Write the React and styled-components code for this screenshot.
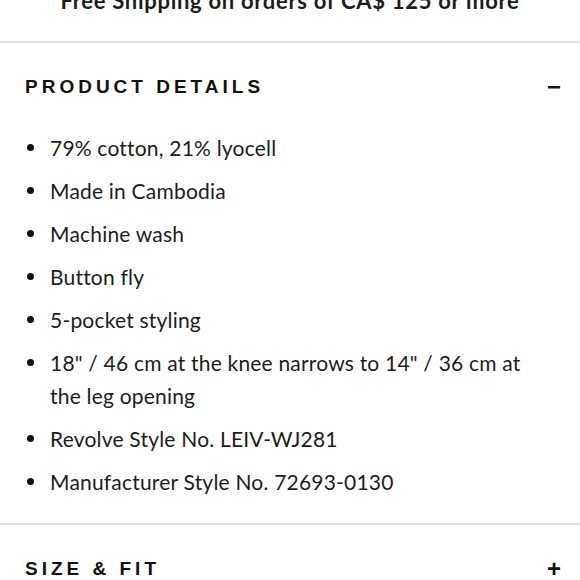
import React from "react";
import styled, { createGlobalStyle } from "styled-components";

const Global = createGlobalStyle`
  html, body {
    margin: 0;
    padding: 0;
    background: #fff;
    overflow: hidden;
  }
  body {
    font-family: "Lato", "Liberation Sans", sans-serif;
    color: #1c1c1c;
  }
`;

const Page = styled.div`
  width: 580px;
`;

const Banner = styled.div`
  height: 41px;
  border-bottom: 2px solid #e2e2e2;
  overflow: hidden;
  text-align: center;
  font-family: "Lato", sans-serif;
  font-weight: 700;
  font-size: 22px;
  letter-spacing: 0.7px;
  line-height: 24px;

  span {
    display: block;
    margin-top: -11px;
  }
`;

const Section = styled.section`
  border-bottom: ${(p) => (p.$last ? "none" : "2px solid #e2e2e2")};
`;

const Header = styled.div`
  height: 88px;
  display: flex;
  align-items: center;
  justify-content: space-between;
  padding: 0 19px 0 25px;
`;

const Title = styled.h2`
  margin: 0;
  font-family: "Liberation Sans", sans-serif;
  font-weight: 700;
  font-size: 19px;
  letter-spacing: 4px;
  color: #111;
`;

const Toggle = styled.span`
  font-family: "Liberation Sans", sans-serif;
  font-weight: 700;
  font-size: 24px;
  line-height: 1;
  color: #111;
`;

const List = styled.ul`
  list-style: none;
  margin: 0;
  padding: 0 40px 25px 50px;
`;

const Item = styled.li`
  position: relative;
  font-size: 21px;
  line-height: 33px;
  margin-bottom: 10px;
  letter-spacing: 0.2px;

  &:last-child {
    margin-bottom: 0;
  }

  &::before {
    content: "";
    position: absolute;
    left: -23px;
    top: 13px;
    width: 7px;
    height: 7px;
    border-radius: 50%;
    background: #111;
  }
`;

const details = [
  "79% cotton, 21% lyocell",
  "Made in Cambodia",
  "Machine wash",
  "Button fly",
  "5-pocket styling",
  "18\" / 46 cm at the knee narrows to 14\" / 36 cm at the leg opening",
  "Revolve Style No. LEIV-WJ281",
  "Manufacturer Style No. 72693-0130",
];

export default function App() {
  return (
    <Page>
      <Global />
      <Banner>
        <span>Free Shipping on orders of CA$ 125 or more</span>
      </Banner>
      <Section>
        <Header>
          <Title>PRODUCT DETAILS</Title>
          <Toggle>−</Toggle>
        </Header>
        <List>
          {details.map((d) => (
            <Item key={d}>{d}</Item>
          ))}
        </List>
      </Section>
      <Section $last>
        <Header>
          <Title>SIZE &amp; FIT</Title>
          <Toggle>+</Toggle>
        </Header>
      </Section>
    </Page>
  );
}
